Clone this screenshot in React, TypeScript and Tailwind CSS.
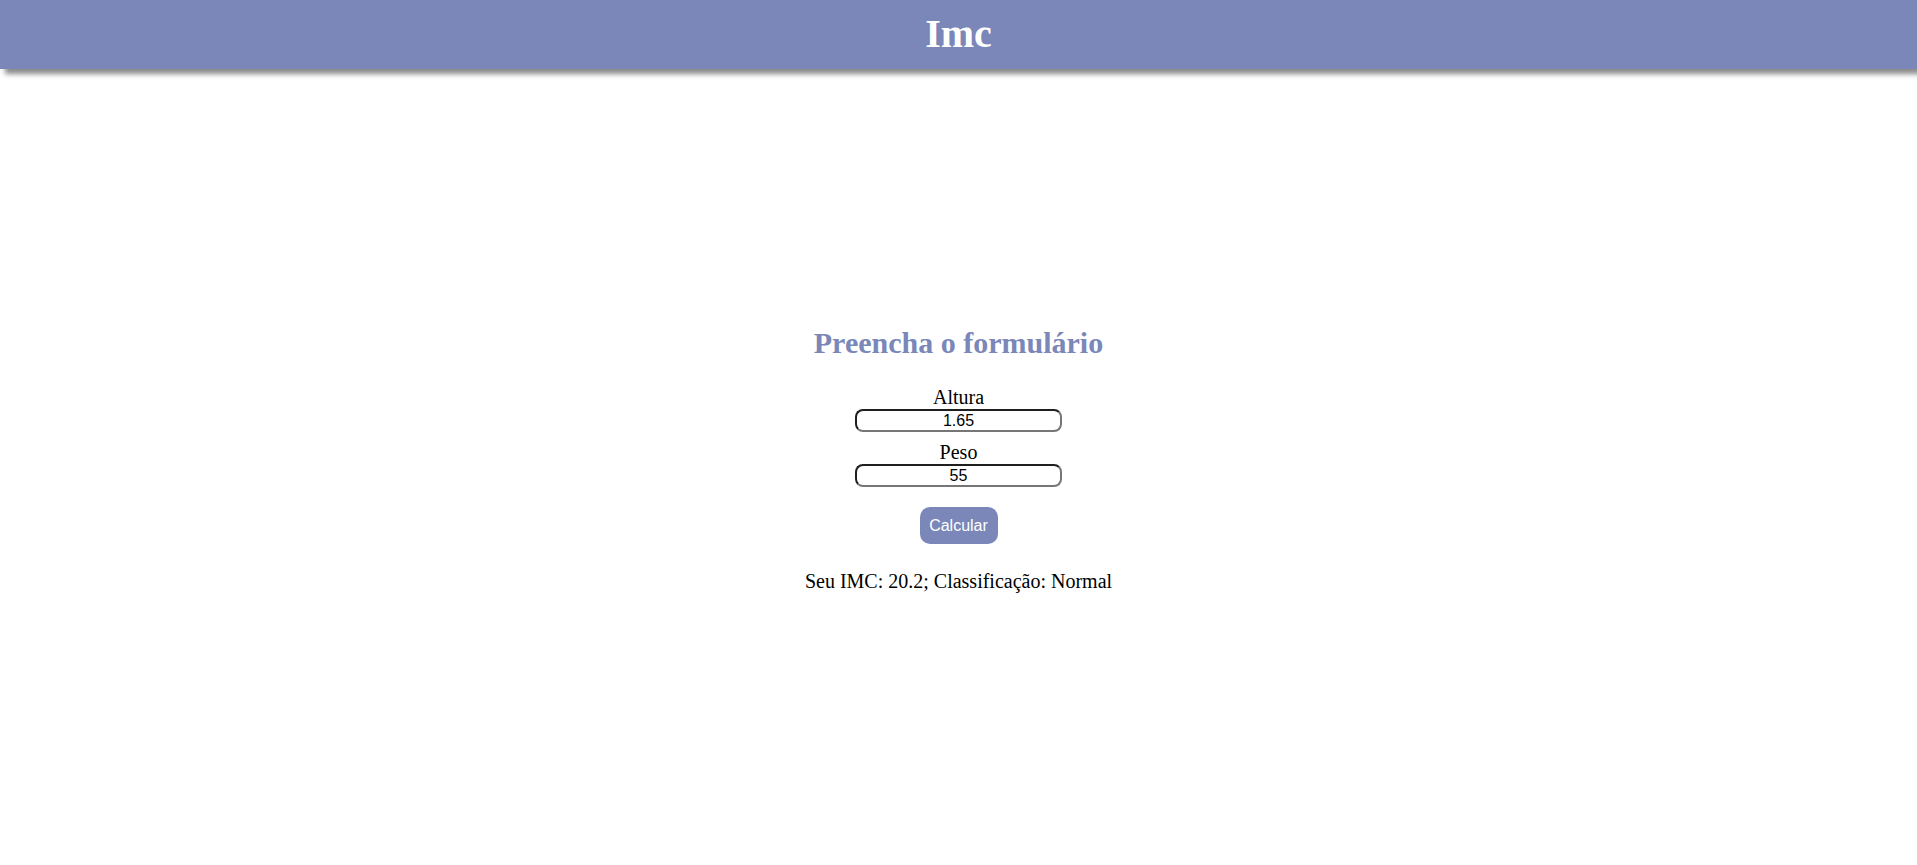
import { useState } from "react";

const Field = ({
  label,
  value,
  onChange,
  className,
}: {
  label: string;
  value: string;
  onChange: (v: string) => void;
  className?: string;
}) => {
  return (
    <div className={"flex flex-col items-center " + (className ?? "")}>
      <label className="block text-[20px] leading-[23px] text-black">{label}</label>
      <input
        type="text"
        value={value}
        onChange={(e) => onChange(e.target.value)}
        className="w-[207px] h-[23px] rounded-[8px] border-2 border-t-[#1f1f1f] border-l-[#1f1f1f] border-r-[#767676] border-b-[#767676] bg-white text-center text-[16px] leading-[18px] text-black font-['Liberation_Sans',Arial,sans-serif] outline-none"
      />
    </div>
  );
};

const App = () => {
  const [altura, setAltura] = useState("1.65");
  const [peso, setPeso] = useState("55");
  const [result, setResult] = useState("Seu IMC: 20.2; Classificação: Normal");

  const calcular = () => {
    const a = parseFloat(altura);
    const p = parseFloat(peso);
    if (!a || !p) return;
    const imc = p / (a * a);
    let cls = "Normal";
    if (imc < 18.5) cls = "Abaixo do peso";
    else if (imc >= 25 && imc < 30) cls = "Sobrepeso";
    else if (imc >= 30) cls = "Obesidade";
    setResult(`Seu IMC: ${imc.toFixed(1)}; Classificação: ${cls}`);
  };

  return (
    <div className="min-h-screen bg-white font-['Liberation_Serif','Times_New_Roman',serif]">
      <header className="h-[69px] w-full bg-[#7a87b8] pt-[14px] shadow-[5px_5px_5px_#8a8a8a]">
        <h1 className="text-center text-[40px] leading-[40px] font-bold text-white">Imc</h1>
      </header>
      <main className="flex flex-col items-center pt-[259px]">
        <h2 className="text-[30px] leading-[30px] font-bold text-[#7a87b8]">Preencha o formulário</h2>
        <form
          className="mt-[28px] flex flex-col items-center"
          onSubmit={(e) => {
            e.preventDefault();
            calcular();
          }}
        >
          <Field label="Altura" value={altura} onChange={setAltura} />
          <Field label="Peso" value={peso} onChange={setPeso} className="mt-[9px]" />
          <button
            type="submit"
            className="mt-[20px] h-[37px] w-[78px] rounded-[10px] bg-[#7a87b8] text-[16px] text-white font-['Liberation_Sans',Arial,sans-serif]"
          >
            Calcular
          </button>
        </form>
        <p className="mt-[26px] text-[20px] leading-[23px] text-black">{result}</p>
      </main>
    </div>
  );
};

export default App;
